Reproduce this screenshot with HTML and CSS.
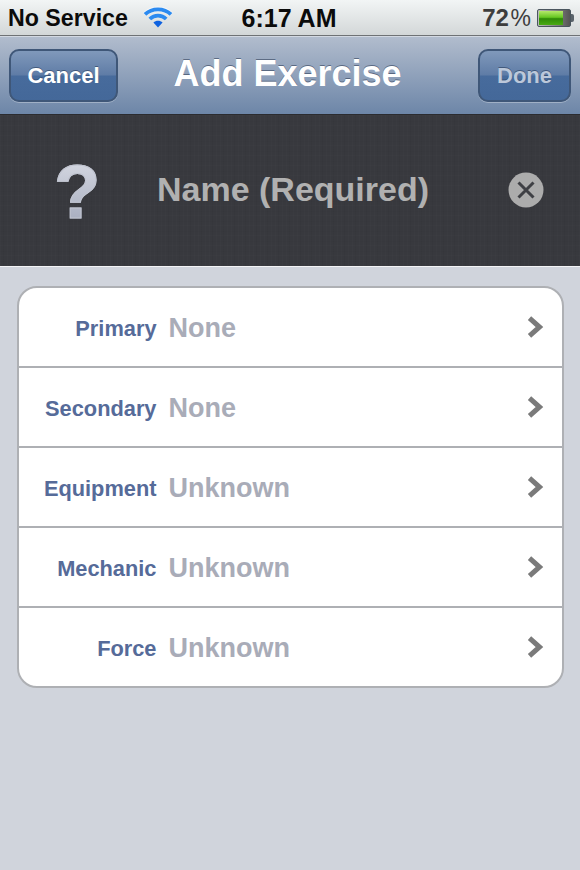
FILE: index.html
```html
<!DOCTYPE html>
<html lang="en">
<head>
<meta charset="utf-8">
<title>Add Exercise</title>
<link rel="stylesheet" href="styles.css">
</head>
<body>
<div class="statusbar">
  <div class="status-left">
    <span class="carrier">No Service</span>
    <svg class="wifi" width="30" height="24" viewBox="0 0 30 24">
      <g fill="none" stroke="#fff" stroke-opacity="0.6" stroke-width="5">
        <path d="M1.800 9.400C9 2.200 21 2.200 28.200 9.400"/>
      </g>
      <g fill="none" stroke="#2b8af0" stroke-width="3.800">
        <path d="M2 9.400C9 2.600 21 2.600 28 9.400"/>
        <path d="M6.800 14C11.400 9.600 18.600 9.600 23.200 14"/>
      </g>
      <path d="M10.400 17.600C13 15 17 15 19.600 17.600L15 22.500Z" fill="#0f62e0"/>
    </svg>
  </div>
  <div class="clock">6:17 AM</div>
  <div class="status-right">
    <span class="pct"><span>72</span> <span class="pct-sign">%</span></span>
    <div class="battery"><div class="battery-body"><div class="battery-fill"></div></div><div class="battery-tip"></div></div>
  </div>
</div>
<header class="navbar">
  <button class="navbtn cancel" type="button">Cancel</button>
  <h1 class="title">Add Exercise</h1>
  <button class="navbtn done" type="button">Done</button>
</header>
<section class="namepanel">
  <div class="qmark">?</div>
  <div class="nameinput">Name (Required)</div>
  <svg class="clear" width="36" height="36" viewBox="0 0 36 36">
    <circle cx="18" cy="18" r="17.500" fill="#acacac"/>
    <path d="M10.500 10.500L25.500 25.500M25.500 10.500L10.500 25.500" stroke="#3f4045" stroke-width="3" fill="none"/>
  </svg>
</section>
<main class="content">
  <div class="card">
    <div class="row"><span class="label">Primary</span><span class="value">None</span><svg class="chev" width="18" height="24" viewBox="0 0 18 24"><path d="M3.500 3.200L13.500 12L3.500 20.800" fill="none" stroke="#7a7a7a" stroke-width="5"/></svg></div>
    <div class="row"><span class="label">Secondary</span><span class="value">None</span><svg class="chev" width="18" height="24" viewBox="0 0 18 24"><path d="M3.500 3.200L13.500 12L3.500 20.800" fill="none" stroke="#7a7a7a" stroke-width="5"/></svg></div>
    <div class="row"><span class="label">Equipment</span><span class="value">Unknown</span><svg class="chev" width="18" height="24" viewBox="0 0 18 24"><path d="M3.500 3.200L13.500 12L3.500 20.800" fill="none" stroke="#7a7a7a" stroke-width="5"/></svg></div>
    <div class="row"><span class="label">Mechanic</span><span class="value">Unknown</span><svg class="chev" width="18" height="24" viewBox="0 0 18 24"><path d="M3.500 3.200L13.500 12L3.500 20.800" fill="none" stroke="#7a7a7a" stroke-width="5"/></svg></div>
    <div class="row"><span class="label">Force</span><span class="value">Unknown</span><svg class="chev" width="18" height="24" viewBox="0 0 18 24"><path d="M3.500 3.200L13.500 12L3.500 20.800" fill="none" stroke="#7a7a7a" stroke-width="5"/></svg></div>
  </div>
</main>
</body>
</html>
```
FILE: styles.css
```css
* { box-sizing: border-box; }
html, body { margin: 0; padding: 0; }
body {
  width: 580px;
  height: 870px;
  overflow: hidden;
  background: #d0d4dc;
  font-family: "Liberation Sans", Arial, sans-serif;
  display: flex;
  flex-direction: column;
}
.statusbar {
  height: 36px;
  flex: none;
  display: grid;
  grid-template-columns: 1fr auto 1fr;
  align-items: center;
  padding: 0 6px 0 8px;
  background: linear-gradient(#f2f5f5, #d3d7d8);
  border-bottom: 1px solid #6f7275;
  color: #0b0b0b;
  font-weight: bold;
  font-size: 23.200px;
}
.status-left { display: flex; align-items: center; gap: 15px; }
.carrier { line-height: 36px; }
.wifi { margin-top: -3px; }
.clock { line-height: 36px; font-size: 25px; padding-right: 4px; }
.status-right { display: flex; align-items: center; justify-content: flex-end; gap: 6px; }
.pct { color: #3d3d3d; font-size: 24px; white-space: nowrap; word-spacing: -5px; }
.pct-sign { font-weight: normal; font-size: 23px; }
.battery { display: flex; align-items: center; }
.battery-body {
  width: 34px;
  height: 18px;
  border: 1px solid #4a555e;
  border-radius: 2px;
  padding: 1px;
  background: linear-gradient(90deg, #bbb, #555);
}
.battery-fill {
  width: 24px;
  height: 100%;
  background: linear-gradient(#b4e86a 0%, #66c722 45%, #2f8a08 55%, #49aa12 100%);
}
.battery-tip { width: 3px; height: 8px; background: #59626a; border-radius: 0 2px 2px 0; }
.navbar {
  height: 78px;
  flex: none;
  display: flex;
  align-items: center;
  justify-content: space-between;
  padding: 0 9px;
  background: linear-gradient(#b1bccd, #6d86a8);
  border-top: 1px solid #d3d9e2;
  position: relative;
}
.navbtn {
  height: 53px;
  padding: 0;
  border: 2px solid #3f5778;
  border-radius: 10px;
  background: linear-gradient(#8099bb 0%, #5f7ca6 49%, #476b9c 51%, #446899 100%);
  box-shadow: 0 1px 0 rgba(255,255,255,0.3);
  font-family: inherit;
  font-weight: bold;
  font-size: 22px;
  text-shadow: 0 -1px 0 rgba(40,60,90,0.6);
}
.cancel { width: 109px; color: #fff; }
.done { width: 93px; color: #bcc8da; }
.title {
  margin: 0;
  position: absolute;
  left: 0;
  right: 0;
  top: 15px;
  text-align: center;
  padding-right: 5px;
  color: #fff;
  font-size: 36px;
  line-height: 44px;
  font-weight: bold;
  text-shadow: 0 -1px 0 rgba(50,65,90,0.6);
  pointer-events: none;
}
.namepanel {
  height: 153px;
  flex: none;
  display: flex;
  align-items: center;
  padding-left: 54px;
  padding-right: 36px;
  border-top: 1px solid #2b2c30;
  border-bottom: 1px solid #f3f4f6;
  background-color: #38393e;
  background-image:
    repeating-linear-gradient(90deg, rgba(255,255,255,0.012) 0 1px, transparent 1px 3px, rgba(0,0,0,0.03) 3px 4px, transparent 4px 7px, rgba(255,255,255,0.012) 7px 8px, transparent 8px 11px),
    repeating-linear-gradient(0deg, rgba(255,255,255,0.012) 0 1px, transparent 1px 4px, rgba(0,0,0,0.025) 4px 5px, transparent 5px 10px);
}
.qmark {
  width: 103px;
  font-size: 76px;
  line-height: 84px;
  font-weight: bold;
  background: linear-gradient(#d3d6e0 15%, #a8aebf 85%);
  -webkit-background-clip: text;
  background-clip: text;
  color: transparent;
  -webkit-text-stroke: 1px #c0c4d0;
  margin-top: 3px;
}
.nameinput {
  flex: 1;
  color: #b1b1b1;
  font-size: 34px;
  font-weight: bold;
  white-space: nowrap;
  margin-top: -2px;
}
.clear { flex: none; margin-top: -2px; }
.content { flex: 1; padding: 19px 16.500px 0; }
.card {
  background: #fff;
  border: 2px solid #aeb0b4;
  border-radius: 20px;
  overflow: hidden;
}
.row {
  height: 80px;
  display: flex;
  align-items: center;
  border-bottom: 2px solid #aeb0b4;
  padding-right: 18px;
}
.row:last-child { border-bottom: 0; height: 78px; }
.label {
  width: 138px;
  text-align: right;
  color: #566b99;
  font-size: 21.800px;
  font-weight: bold;
  margin-top: 3px;
}
.value {
  flex: 1;
  margin-left: 12px;
  color: #a9acb8;
  font-size: 27px;
  font-weight: bold;
  margin-top: 3px;
}
.chev { flex: none; margin-top: -1px; }
```
